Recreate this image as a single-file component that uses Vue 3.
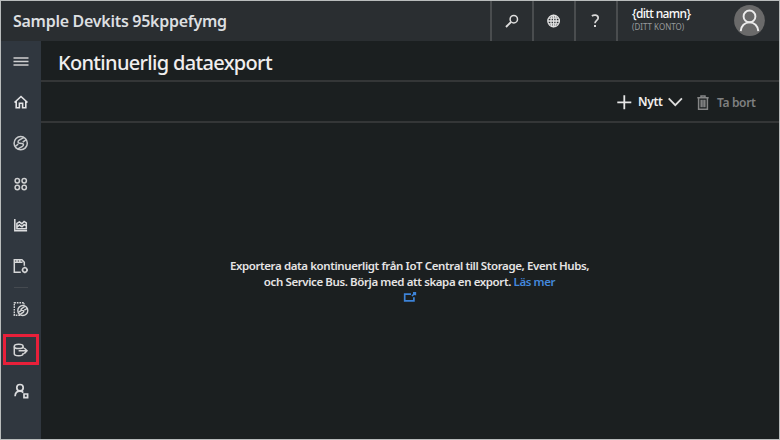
<script setup>
</script>

<template>
  <div class="window">
    <header class="topbar">
      <div class="brand"><span>Sample Devkits 95kppefymg</span></div>
      <button class="tool" aria-label="search">
        <svg width="16" height="16" viewBox="0 0 16 16" fill="none" stroke="#dedede" stroke-width="1.5"><circle cx="9.800" cy="6.200" r="3.700" /><path d="M7 9 2 14" stroke-width="1.900" /></svg>
      </button>
      <button class="tool" aria-label="language">
        <svg width="16" height="16" viewBox="0 0 16 16" fill="none" stroke="#e2e2e2" stroke-width="1.300"><circle cx="7.600" cy="8" r="5.800" /><ellipse cx="7.600" cy="8" rx="2.700" ry="5.700" /><path d="M7.600 2.300v11.400M1.900 8h11.400M2.800 5.200h9.600M2.800 10.800h9.600" /></svg>
      </button>
      <button class="tool" aria-label="help">
        <svg width="16" height="16" viewBox="0 0 16 16" fill="none" stroke="#d8d8d8" stroke-width="1.700"><path d="M3.900 3C5.700 1.600 10.200 1.600 10.200 4.900 10.200 7.300 7 7.400 7 10.200" /><path d="M7 12v2" stroke-width="2" /></svg>
      </button>
      <div class="account">
        <div class="who">
          <span class="name">{ditt namn}</span>
          <span class="acct">(DITT KONTO)</span>
        </div>
        <svg class="avatar" width="32" height="32" viewBox="0 0 32 32" fill="none" stroke="#ececec" stroke-width="1.900"><circle cx="16.500" cy="16.500" r="15.400" fill="#6a6a6a" stroke="none" /><circle cx="16.500" cy="12.400" r="5.900" /><path d="M7.700 27.100c.4-5.200 4-8.700 8.800-8.700s8.400 3.500 8.800 8.700" /></svg>
      </div>
    </header>
    <div class="body">
      <nav class="side">
        <a class="item"><svg width="16" height="16" viewBox="0 0 16 16" stroke="#cfd0d1" stroke-width="1.500"><path d="M.5 5h15M.5 8.500h15M.5 12h15" /></svg></a>
        <a class="item"><svg width="16" height="16" viewBox="0 0 16 16" fill="none" stroke="#e4e4e6" stroke-width="1.600"><path d="M1.500 8.500 8 2.500l6.500 6M3.200 7.500v6.300h3.200V9.200h3.200v4.600h3.200V7.500" /></svg></a>
        <a class="item"><svg width="16" height="16" viewBox="0 0 16 16" fill="none" stroke="#c9cbcd" stroke-width="1.500"><circle cx="7.700" cy="8.200" r="6.600" /><path d="M10.700 2.700 6.200 5.200C4.400 6.400 4.800 8.200 6.500 8.300l2.500.2c1.800.2 1.900 2 .4 2.900L5 13.900M2.200 11.500 5.200 9.200M9.700 7.200l3.500-2.500" /></svg></a>
        <a class="item"><svg width="16" height="16" viewBox="0 0 16 16" fill="none" stroke="#cfd0d1" stroke-width="1.500"><circle cx="4.300" cy="4.800" r="2.200" /><circle cx="11.200" cy="4.800" r="2.200" /><circle cx="4.300" cy="11.500" r="2.200" /><circle cx="11.200" cy="11.500" r="2.200" /></svg></a>
        <a class="item"><svg width="16" height="16" viewBox="0 0 16 16" fill="none" stroke="#dcdddf" stroke-width="1.500"><path d="M1.800 2v11.800h12.300M3.900 11.700V6.400l2.500-1.500 2.500 1.800 2.200-2.300 2.200 1.500v5.800zM4.100 10l2.300-2 2.600 1.700 2.100-2 2 1" /></svg></a>
        <a class="item"><svg width="16" height="16" viewBox="0 0 16 16" fill="none" stroke="#d5d6d7" stroke-width="1.500"><path d="M7.800 14.300H1.300V1.700h8.200M1.300 4.200h8.200M9.200 1.900l2.100 2.300v3.600M4 1.700v2.500M6.800 1.700v2.500" /><circle cx="11.800" cy="12" r="2.200" /><path d="M11.800 8.800V10M11.800 14v1.200M8.700 12h1.100M13.800 12H15" /></svg></a>
        <i class="rule"></i>
        <a class="item"><svg width="16" height="16" viewBox="0 0 16 16" fill="none" stroke="#d5d6d7" stroke-width="1.400"><path d="M7 14.300H1.300V1.700h9.700v1.800" stroke-dasharray="1.700 .9" /><circle cx="9.800" cy="9.500" r="5" /><path d="M11.800 5.500 8.600 7.600c-1.200.9-.5 1.700.6 1.800 1.900.1 2 1.200.9 2L7.400 13.200M5.600 11.200l2.500-1.600M11.300 9.200l2.800-1.700" /></svg></a>
        <a class="item picked"><svg width="16" height="16" viewBox="0 0 16 16" fill="none" stroke="#d5d6d7" stroke-width="1.500"><ellipse cx="5.700" cy="4.400" rx="4.400" ry="2.100" /><path d="M1.300 4.400v7.400c0 2.700 8.800 2.700 8.800 0V11M10.100 4.400v2M5.600 8.800h8.300M11.200 6l2.800 2.800-2.800 2.800" /></svg></a>
        <a class="item"><svg width="16" height="16" viewBox="0 0 16 16" fill="none" stroke="#dcdddf" stroke-width="1.700"><circle cx="7" cy="4.700" r="3.200" /><path d="M2.100 13.300c.1-3.200 1.900-5.100 4.900-5.100 1.500 0 2.500.4 3.300 1.400" /><path d="M11 11h3.600v3.600H11z" /></svg></a>
      </nav>
      <main class="main">
        <h1><span>Kontinuerlig dataexport</span></h1>
        <div class="commands">
          <svg class="plus" width="16" height="16" viewBox="0 0 16 16" stroke="#e6e6e6" stroke-width="1.800"><path d="M1.300 8.300h14M8.300 1.300v14" /></svg>
          <span class="new">Nytt</span>
          <svg class="chev" width="16" height="16" viewBox="0 0 16 16" fill="none" stroke="#dedede" stroke-width="1.800"><path d="m1.700 4.300 6.600 6.800 6.600-6.800" /></svg>
          <svg class="bin" width="12" height="16" viewBox="0 0 12 16" fill="none" stroke="#858686" stroke-width="1.500"><path d="M.3 3.800h11.400M4 3.500V2h4v1.500M1.600 4.100v11.100h8.800V4.100M4.200 5.800v7.500M6 5.800v7.500M7.800 5.800v7.500" /></svg>
          <span class="del">Ta bort</span>
        </div>
        <div class="empty">
          <p>Exportera data kontinuerligt från IoT Central till Storage, Event Hubs,</p>
          <p>och Service Bus. Börja med att skapa en export. <a>Läs mer</a></p>
          <svg width="14" height="12" viewBox="0 0 14 12" fill="none" stroke="#3d83d8" stroke-width="1.700"><path d="M8 3.200H1.700v6.600h9.200V6.300M9 5 12 2M10 1.800h2.300v2.400" /></svg>
        </div>
      </main>
    </div>
  </div>
</template>

<style>
body { margin: 0; background: #1b1f20; }
</style>

<style scoped>
* { box-sizing: border-box; }
.window {
  width: 780px; height: 440px; border: 1px solid #b9bcbc; background: #1b1f20;
  display: flex; flex-direction: column; overflow: hidden;
  font-family: "Noto Sans", "Open Sans", sans-serif; color: #ececec; white-space: nowrap;
}
svg { display: block; flex: none; }
.topbar { height: 40px; flex: none; display: flex; background: #2a2e31; }
.brand { width: 489px; padding-left: 12px; font-size: 16px; line-height: 41px; font-weight: 600; letter-spacing: -0.28px; color: #dcdfe0; }
.tool { width: 42px; height: 40px; padding: 0; border: 0; border-left: 2px solid #4a4d4f; background: none; display: flex; align-items: center; justify-content: center; }
.account { flex: 1; border-left: 2px solid #4a4d4f; display: flex; justify-content: space-between; padding: 3px 14px 0 14px; }
.who { display: flex; flex-direction: column; }
.name { font-size: 12px; line-height: 20px; font-weight: 500; letter-spacing: -0.65px; color: #fafafa; }
.acct { font-size: 8px; line-height: 6px; color: #979a9c; }
.body { flex: 1; display: flex; min-height: 0; }
.side { width: 40px; flex: none; background: #30373f; display: flex; flex-direction: column; align-items: center; }
.item { width: 36px; height: 41px; display: flex; align-items: center; justify-content: center; flex: none; padding: 0 1px 2px 0; }
.rule { width: 14px; height: 1px; background: #454a50; margin-bottom: 1px; flex: none; }
.picked { height: 31px; margin: 4px 0 6px; border: 3px solid #e8203a; padding: 0 1px 0 0; }
.main { flex: 1; display: flex; flex-direction: column; }
h1 { margin: 0; height: 41px; border-bottom: 2px solid #343637; padding-left: 17px; font-size: 20px; line-height: 43px; font-weight: 500; letter-spacing: -0.68px; color: #f0eeee; }
.commands { height: 41px; border-bottom: 2px solid #343637; display: flex; align-items: center; padding-left: 575px; font-size: 12px; line-height: 39px; }
.new { margin-left: 6px; width: 25px; font-weight: 600; letter-spacing: -0.3px; color: #f2efef; }
.chev { margin-left: 4px; }
.bin { margin-left: 14px; }
.del { margin-left: 8px; padding-top: 1px; font-weight: 600; letter-spacing: -0.35px; color: #7f8080; }
.empty { flex: 1; display: flex; flex-direction: column; align-items: center; padding: 135px 1px 0 0; font-size: 11.5px; font-weight: 600; letter-spacing: -0.4px; color: #e6e4e4; }
p { margin: 0; line-height: 16px; }
p a { color: #4488dc; }
.empty svg { margin-top: 1px; }
</style>
